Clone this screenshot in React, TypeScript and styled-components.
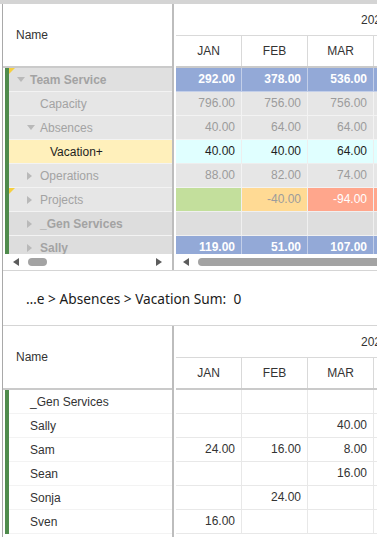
import React from 'react';
import styled, { createGlobalStyle } from 'styled-components';

type Tone = 'total' | 'plain' | 'selected' | 'group' | 'good' | 'warn' | 'bad' | 'white';

const tones: Record<Tone, { bg: string; color: string; bold?: boolean; line: string }> = {
  total: { bg: '#93a9d7', color: '#ffffff', bold: true, line: '#c3cfe9' },
  plain: { bg: '#e6e6e6', color: '#9c9c9c', line: '#f3f3f3' },
  selected: { bg: '#e0ffff', color: '#1e1e1e', line: '#eeeeee' },
  group: { bg: '#dedede', color: '#9c9c9c', line: '#f0f0f0' },
  good: { bg: '#c3df9c', color: '#9c9c9c', line: '#f0f0f0' },
  warn: { bg: '#ffda94', color: '#9c9c9c', line: '#f0f0f0' },
  bad: { bg: '#ffa68c', color: '#ffffff', line: '#f0f0f0' },
  white: { bg: '#ffffff', color: '#333333', line: '#e8e8e8' },
};

const GlobalStyle = createGlobalStyle`
  html, body { margin: 0; padding: 0; background: #fff; }
  body {
    font-family: 'Liberation Sans', Arial, sans-serif;
    font-size: 12px;
    color: #333;
  }
  * { box-sizing: border-box; }
`;

const Page = styled.div`
  min-height: 100vh;
  display: flex;
  border-top: 4px solid #d4d4d4;
  padding-left: 2px;
`;

const Frame = styled.div`
  flex: 1;
  display: flex;
  flex-direction: column;
  border-left: 1px solid #a9a9a9;
  overflow: hidden;
`;

const Grid = styled.section<{ $grow?: boolean; $top?: boolean }>`
  display: flex;
  flex: ${({ $grow }) => ($grow ? '1' : 'none')};
  border-top: ${({ $top }) => ($top ? '1px solid #d5d5d5' : 'none')};
  border-bottom: ${({ $top }) => ($top ? 'none' : '1px solid #d5d5d5')};
`;

const LeftPane = styled.div`
  width: 171px;
  flex: none;
  display: flex;
  flex-direction: column;
  border-right: 2px solid #bdbdbd;
`;

const RightPane = styled.div`
  flex: 1;
  min-width: 0;
  display: flex;
  flex-direction: column;
  padding-left: 2px;
  overflow: hidden;
`;

const NameHeader = styled.div`
  height: 64px;
  flex: none;
  display: flex;
  align-items: center;
  padding-left: 13px;
  border-bottom: 2px solid #cacaca;
`;

const YearRow = styled.div`
  height: 32px;
  display: flex;
  align-items: center;
  padding-left: 185px;
  white-space: nowrap;
  border-bottom: 1px solid #d9d9d9;
`;

const MonthRow = styled.div`
  height: 32px;
  display: flex;
  border-bottom: 2px solid #cacaca;
`;

const MonthCell = styled.div`
  width: 66px;
  flex: none;
  display: flex;
  align-items: center;
  justify-content: center;
  border-right: 1px solid #d9d9d9;
`;

const Body = styled.div<{ $height?: number; $marker?: boolean }>`
  height: ${({ $height }) => ($height ? `${$height}px` : 'auto')};
  overflow: hidden;
  margin-left: ${({ $marker }) => ($marker ? '2px' : '0')};
  border-left: ${({ $marker }) => ($marker ? '4px solid #4f8b4c' : 'none')};
`;

const NameRow = styled.div<{ $bg: string; $color: string; $bold?: boolean; $indent: number; $comment?: boolean }>`
  position: relative;
  height: 24px;
  display: flex;
  align-items: center;
  padding-left: ${({ $indent }) => $indent}px;
  background: ${({ $bg }) => $bg};
  color: ${({ $color }) => $color};
  font-weight: ${({ $bold }) => ($bold ? 700 : 400)};
  border-bottom: 1px solid #f3f3f3;
  white-space: nowrap;
  &::before {
    content: '';
    display: ${({ $comment }) => ($comment ? 'block' : 'none')};
    position: absolute;
    top: 0;
    left: 0;
    border-style: solid;
    border-width: 6px 6px 0 0;
    border-color: #f6cf3f transparent transparent transparent;
  }
`;

const Toggle = styled.span`
  width: 13px;
  flex: none;
  display: flex;
  align-items: center;
`;

const DataRow = styled.div`
  display: flex;
  height: 24px;
`;

const DataCell = styled.div<{ $tone: Tone }>`
  width: 66px;
  flex: none;
  height: 24px;
  line-height: 23px;
  text-align: right;
  padding-right: 6px;
  white-space: nowrap;
  background: ${({ $tone }) => tones[$tone].bg};
  color: ${({ $tone }) => tones[$tone].color};
  font-weight: ${({ $tone }) => (tones[$tone].bold ? 700 : 400)};
  border-right: 1px solid ${({ $tone }) => tones[$tone].line};
  border-bottom: 1px solid ${({ $tone }) => tones[$tone].line};
`;

const ScrollRow = styled.div<{ $left: number; $right: number }>`
  height: 16px;
  flex: none;
  display: flex;
  align-items: center;
  padding: 0 ${({ $right }) => $right}px 0 ${({ $left }) => $left}px;
  background: #fff;
`;

const Track = styled.div`
  flex: 1;
  display: flex;
  align-items: center;
  padding-left: 9px;
  overflow: hidden;
`;

const Thumb = styled.div<{ $width: number }>`
  width: ${({ $width }) => $width}px;
  flex: none;
  height: 8px;
  border-radius: 4px;
  background: #a3a3a3;
`;

const Status = styled.div`
  height: 54px;
  display: flex;
  align-items: center;
  padding-left: 23px;
  font-family: 'Noto Sans', 'Open Sans', sans-serif;
  font-size: 13.7px;
  color: #1a1a1a;
  white-space: pre;
`;

const Down = () => (
  <svg width="8" height="5" viewBox="0 0 8 5">
    <polygon points="0,0 8,0 4,5" fill="#b9b9b9" />
  </svg>
);

const Right = () => (
  <svg width="5" height="8" viewBox="0 0 5 8">
    <polygon points="0,0 5,4 0,8" fill="#b9b9b9" />
  </svg>
);

const Arrow = ({ dir }: { dir: 'left' | 'right' }) => (
  <svg width="6" height="8" viewBox="0 0 6 8">
    <polygon points={dir === 'left' ? '6,0 0,4 6,8' : '0,0 6,4 0,8'} fill="#5c5c5c" />
  </svg>
);

type Row = {
  name: string;
  level: number;
  toggle?: 'down' | 'right';
  bg: string;
  color: string;
  bold?: boolean;
  comment?: boolean;
  cells: [Tone, string][];
};

const months = ['JAN', 'FEB', 'MAR', 'APR'];

const topRows: Row[] = [
  {
    name: 'Team Service', level: 0, toggle: 'down', bg: '#e0e0e0', color: '#a3a3a3', bold: true, comment: true,
    cells: [['total', '292.00'], ['total', '378.00'], ['total', '536.00'], ['total', '410.00']],
  },
  {
    name: 'Capacity', level: 1, bg: '#e6e6e6', color: '#a3a3a3',
    cells: [['plain', '796.00'], ['plain', '756.00'], ['plain', '756.00'], ['plain', '796.00']],
  },
  {
    name: 'Absences', level: 1, toggle: 'down', bg: '#e6e6e6', color: '#a3a3a3',
    cells: [['plain', '40.00'], ['plain', '64.00'], ['plain', '64.00'], ['plain', '40.00']],
  },
  {
    name: 'Vacation+', level: 2, bg: '#fff0bb', color: '#1e1e1e',
    cells: [['selected', '40.00'], ['selected', '40.00'], ['selected', '64.00'], ['selected', '40.00']],
  },
  {
    name: 'Operations', level: 1, toggle: 'right', bg: '#e6e6e6', color: '#a3a3a3',
    cells: [['plain', '88.00'], ['plain', '82.00'], ['plain', '74.00'], ['plain', '80.00']],
  },
  {
    name: 'Projects', level: 1, toggle: 'right', bg: '#e6e6e6', color: '#a3a3a3', comment: true,
    cells: [['good', ''], ['warn', '-40.00'], ['bad', '-94.00'], ['bad', '-12.00']],
  },
  {
    name: '_Gen Services', level: 1, toggle: 'right', bg: '#dddddd', color: '#a3a3a3', bold: true,
    cells: [['group', ''], ['group', ''], ['group', ''], ['group', '']],
  },
  {
    name: 'Sally', level: 1, toggle: 'right', bg: '#dddddd', color: '#a3a3a3', bold: true,
    cells: [['total', '119.00'], ['total', '51.00'], ['total', '107.00'], ['total', '88.00']],
  },
];

const people: [string, string[]][] = [
  ['_Gen Services', ['', '', '', '']],
  ['Sally', ['', '', '40.00', '']],
  ['Sam', ['24.00', '16.00', '8.00', '']],
  ['Sean', ['', '', '16.00', '']],
  ['Sonja', ['', '24.00', '', '']],
  ['Sven', ['16.00', '', '', '']],
];

const bottomRows: Row[] = people.map(([name, values]) => ({
  name,
  level: 0,
  bg: '#ffffff',
  color: '#333333',
  cells: values.map((v) => ['white', v] as [Tone, string]),
}));

const Header = () => (
  <>
    <YearRow>2024</YearRow>
    <MonthRow>
      {months.map((m) => (
        <MonthCell key={m}>{m}</MonthCell>
      ))}
    </MonthRow>
  </>
);

const PivotGrid = ({ rows, bodyHeight, scroll, top }: { rows: Row[]; bodyHeight?: number; scroll?: boolean; top?: boolean }) => (
  <Grid $top={top} $grow={top}>
    <LeftPane>
      <NameHeader>Name</NameHeader>
      <Body $height={bodyHeight} $marker>
        {rows.map((r) => (
          <NameRow
            key={r.name}
            $bg={r.bg}
            $color={r.color}
            $bold={r.bold}
            $comment={r.comment}
            $indent={8 + r.level * 10}
          >
            <Toggle>{r.toggle === 'down' ? <Down /> : r.toggle === 'right' ? <Right /> : null}</Toggle>
            {r.name}
          </NameRow>
        ))}
      </Body>
      {scroll && (
        <ScrollRow $left={10} $right={10}>
          <Arrow dir="left" />
          <Track>
            <Thumb $width={19} />
          </Track>
          <Arrow dir="right" />
        </ScrollRow>
      )}
    </LeftPane>
    <RightPane>
      <Header />
      <Body $height={bodyHeight}>
        {rows.map((r) => (
          <DataRow key={r.name}>
            {r.cells.map(([tone, v], i) => (
              <DataCell key={i} $tone={tone}>
                {v}
              </DataCell>
            ))}
          </DataRow>
        ))}
      </Body>
      {scroll && (
        <ScrollRow $left={7} $right={0}>
          <Arrow dir="left" />
          <Track>
            <Thumb $width={240} />
          </Track>
        </ScrollRow>
      )}
    </RightPane>
  </Grid>
);

export default function App() {
  return (
    <>
      <GlobalStyle />
      <Page>
        <Frame>
          <PivotGrid rows={topRows} bodyHeight={186} scroll />
          <Status>{'…e > Absences > Vacation Sum:  0'}</Status>
          <PivotGrid rows={bottomRows} top />
        </Frame>
      </Page>
    </>
  );
}
